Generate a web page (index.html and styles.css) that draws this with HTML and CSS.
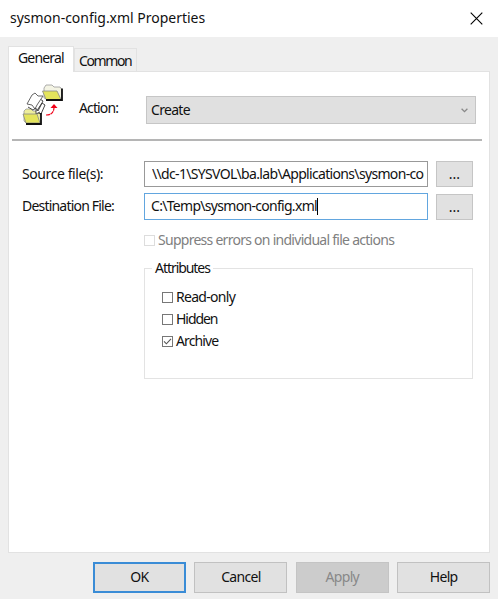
FILE: index.html
```html
<!DOCTYPE html>
<html lang="en">
<head>
<meta charset="utf-8">
<title>sysmon-config.xml Properties</title>
<link rel="stylesheet" href="styles.css">
</head>
<body>
<main class="dialog">
  <header class="titlebar">
    <h1 class="title">sysmon-config.xml Properties</h1>
    <svg class="close" width="13" height="13" viewBox="0 0 13 13"><path d="M.7 .7 12.3 12.3M12.3 .7 .7 12.3" stroke="#000" stroke-width="1.1" fill="none"/></svg>
  </header>
  <nav class="tabs">
    <div class="tab active"><span class="t-general">General</span></div>
    <div class="tab"><span class="t-common">Common</span></div>
  </nav>
  <section class="panel">
    <div class="action">
      <svg class="icon" width="42" height="42" viewBox="0 0 42 42">
        <path d="M22 14V4l2-3h6l2 2h6l1.500 2v10H25z" fill="#f4f4e4" stroke="#999" stroke-width=".8"/>
        <path d="M20.500 7H35l4 8.500H24z" fill="#e4e45c" stroke="#888" stroke-width=".8"/>
        <path d="M24 16h16V4.500" fill="none" stroke="#111" stroke-width="1.800"/>
        <path d="M2 37V27l2-2h5l2 2h7l1 12H4z" fill="#eeee9c" stroke="#999" stroke-width=".8"/>
        <path d="m14 28 6-9 3 2-4 9zM12 24l6-9 3 2-5 10z" fill="#fff" stroke="#333" stroke-width=".9"/>
        <path d="m5 20 5-9 3-2 3 3 5 0-6 9-2 4-3-4z" fill="#fff" stroke="#555" stroke-width=".9"/>
        <path d="m6 23 5 3 3-2v6l4-2" fill="#fff" stroke="#333" stroke-width=".9"/>
        <path d="M1 30h14l3 9H4z" fill="#e4e45c" stroke="#888" stroke-width=".8"/>
        <path d="M4 40h15V29" fill="none" stroke="#111" stroke-width="1.800"/>
        <path d="M24 31c5 0 8-2 8-8" fill="none" stroke="#f00018" stroke-width="1.200" stroke-dasharray="4 .6"/>
        <path d="m28.500 24 3.500-4 3.500 4z" fill="#f00018"/>
      </svg>
      <span class="action-label t-action">Action:</span>
      <div class="select"><span class="t-create">Create</span><svg width="7" height="5" viewBox="0 0 7 5"><path d="M.6 .8 3.500 3.600 6.400 .8" stroke="#888" stroke-width="1.300" fill="none"/></svg></div>
    </div>
    <div class="rule"></div>
    <div class="row source">
      <span class="label t-source">Source file(s):</span>
      <div class="field"><span class="value t-path">\\dc-1\SYSVOL\ba.lab\Applications\sysmon-con</span></div>
      <div class="browse">...</div>
    </div>
    <div class="row destination">
      <span class="label t-dest">Destination File:</span>
      <div class="field focused"><span class="value t-temp">C:\Temp\sysmon-config.xml</span><i class="caret"></i></div>
      <div class="browse">...</div>
    </div>
    <div class="check suppress"><i class="box"></i><span class="t-suppress">Suppress errors on individual file actions</span></div>
    <fieldset class="attributes">
      <legend><span class="t-attr">Attributes</span></legend>
      <div class="check"><i class="box"></i><span class="t-read">Read-only</span></div>
      <div class="check"><i class="box"></i><span class="t-hidden">Hidden</span></div>
      <div class="check last"><i class="box"><svg width="9" height="9" viewBox="0 0 9 9"><path d="M1 4.400 3.400 6.800 8 1.800" stroke="#555" stroke-width="1.100" fill="none"/></svg></i><span class="t-archive">Archive</span></div>
    </fieldset>
  </section>
  <footer class="buttons">
    <div class="button default"><span class="t-ok">OK</span></div>
    <div class="button"><span class="t-cancel">Cancel</span></div>
    <div class="button disabled"><span class="t-apply">Apply</span></div>
    <div class="button"><span class="t-help">Help</span></div>
  </footer>
</main>
</body>
</html>
```
FILE: styles.css
```css
* { box-sizing: border-box; }
body { margin: 0; font: 14px/20px "Noto Sans", "Open Sans", sans-serif; color: #111; letter-spacing: -.7px; white-space: nowrap; }
.dialog { width: 498px; height: 599px; background: #efefef; overflow: hidden; }
.titlebar { height: 37px; background: #fff; display: flex; justify-content: space-between; align-items: flex-start; padding: 8px 15px 0 10px; }
.title { font-size: 14px; font-weight: 400; line-height: 20px; margin: 0; letter-spacing: -.02px; }
.close { margin-top: 4px; }
.tabs { height: 34px; padding: 9px 0 0 8px; display: flex; align-items: flex-end; }
.tab { height: 23px; width: 63px; border: 1px solid #e2e2e2; border-bottom: 0; padding: 2px 0 0 4px; }
.tab.active { height: 26px; width: 66px; background: #fff; position: relative; margin-bottom: -1px; padding: 1px 0 0 9px; }
.panel { width: 482px; height: 482px; margin-left: 8px; background: #fff; border: 1px solid #e2e2e2; }
.action { height: 67px; display: flex; padding: 12px 0 0 13px; }
.icon { flex: none; }
.action-label { width: 67px; margin: 14px 0 0 15px; }
.select { height: 28px; width: 330px; margin-top: 12px; background: #e0e0e0; border: 1px solid #c6c6c6; display: flex; justify-content: space-between; align-items: center; padding: 0 7px 0 4px; }
.rule { height: 2px; margin: 0 7px 0 3px; background: #b5b5b5; }
.row { display: flex; padding-left: 14px; align-items: center; }
.source { margin-top: 20px; height: 26px; }
.destination { margin-top: 6px; height: 27px; }
.label { width: 121px; margin-left: -1px; padding-bottom: 1px; flex: none; }
.row .field { margin-left: 1px; }
.field { width: 284px; height: 26px; border: 1px solid #999; padding: 0 3px 1px 7px; display: flex; align-items: center; }
.focused { height: 27px; border-color: #62a6df; padding-left: 6px; }
.value { overflow: hidden; }
.caret { width: 1px; height: 17px; background: #000; }
.browse { width: 37px; height: 26px; margin-left: 8px; background: #e1e1e1; border: 1px solid #c5c5c5; text-align: center; line-height: 24px; letter-spacing: 0; }
.check { display: flex; align-items: center; height: 20px; }
.box { width: 11px; height: 11px; border: 1px solid #777; background: #fff; margin-right: 3px; display: flex; }
.suppress { margin: 10px 0 0 135px; color: #808080; }
.suppress .box { border-color: #ddd; }
.t-suppress { letter-spacing: -.73px; }
.attributes { margin: 8px 0 0 135px; width: 329px; height: 121px; border: 1px solid #e3e3e3; padding: 8px 0 0 17px; }
legend { margin-left: -10px; padding: 0 3px; height: 20px; }
.attributes .check { height: 22px; }
.buttons { display: flex; gap: 8.4px; padding: 9px 0 0 93px; }
.button { width: 93px; height: 31px; background: #e1e1e1; border: 1px solid #c1c1c1; text-align: center; line-height: 28px; }
.default { border: 2px solid #3a8cd6; line-height: 26px; }
.disabled { background: #ccc; border-color: #c4c4c4; color: #888; }
/* Per-label tracking */
.t-general { letter-spacing: -.85px; }
.t-common { letter-spacing: -1.4px; }
.t-action, .t-archive { letter-spacing: -.87px; }
.t-dest { letter-spacing: -.8px; }
.t-source { letter-spacing: -.42px; }
.t-path { letter-spacing: -.67px; }
.t-temp { letter-spacing: -.7px; }
.t-attr, .t-hidden { letter-spacing: -1.05px; }
.t-ok { letter-spacing: -.45px; }
```
